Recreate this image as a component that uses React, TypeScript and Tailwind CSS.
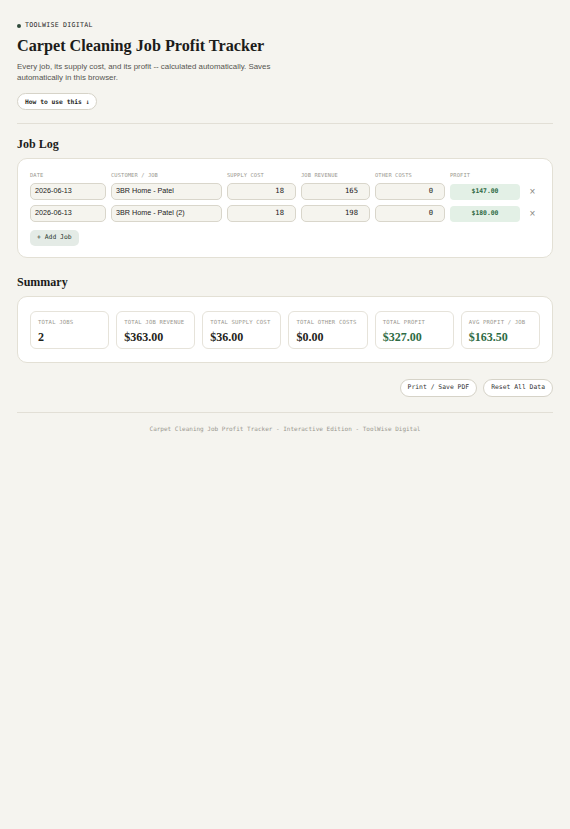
import React from 'react';

type Job = { date: string; customer: string; supply: number; revenue: number; other: number };

const jobs: Job[] = [
  { date: '2026-06-13', customer: '3BR Home - Patel', supply: 18, revenue: 165, other: 0 },
  { date: '2026-06-13', customer: '3BR Home - Patel (2)', supply: 18, revenue: 198, other: 0 },
];

const mono = "font-['DejaVu_Sans_Mono',monospace]";
const serif = "font-['Liberation_Serif',serif]";

const money = (n: number) => '$' + n.toFixed(2);

export default function App() {
  const totalRevenue = jobs.reduce((s, j) => s + j.revenue, 0);
  const totalSupply = jobs.reduce((s, j) => s + j.supply, 0);
  const totalOther = jobs.reduce((s, j) => s + j.other, 0);
  const totalProfit = totalRevenue - totalSupply - totalOther;

  const summary = [
    { label: 'Total Jobs', value: String(jobs.length), green: false },
    { label: 'Total Job Revenue', value: money(totalRevenue), green: false },
    { label: 'Total Supply Cost', value: money(totalSupply), green: false },
    { label: 'Total Other Costs', value: money(totalOther), green: false },
    { label: 'Total Profit', value: money(totalProfit), green: true },
    { label: 'Avg Profit / Job', value: money(totalProfit / jobs.length), green: true },
  ];

  const cols = 'grid grid-cols-[76px_111px_69px_69px_70px_70px_1fr] gap-x-[5px] items-center';

  return (
    <div className="min-h-screen bg-[#f5f4ef] text-[#1c1c1a] font-['Liberation_Sans',Arial,sans-serif]">
      <div className="px-[17px] pt-[21px] pb-[20px]">
        {/* header */}
        <div className={`flex items-center gap-[4px] h-[10px] ${mono} text-[6.6px] tracking-[0.04em] text-[#2a2a28]`}>
          <span className="w-[4px] h-[4px] rounded-full bg-[#2f4a3a]" />
          TOOLWISE DIGITAL
        </div>
        <h1 className={`${serif} font-bold text-[16.2px] leading-[20px] mt-[5px]`}>
          Carpet Cleaning Job Profit Tracker
        </h1>
        <p className="text-[7.9px] leading-[11px] text-[#55544f] mt-[5px] max-w-[275px]">
          Every job, its supply cost, and its profit -- calculated automatically. Saves automatically in this browser.
        </p>
        <div className="flex mt-[10px]">
          <button className={`h-[17px] px-[7px] rounded-full border border-[#d6d3c8] bg-white ${mono} font-bold text-[6.3px] text-[#1f1f1d]`}>
            How to use this ↓
          </button>
        </div>
        <div className="h-px bg-[#e2dfd6] mt-[13px]" />

        {/* job log */}
        <h2 className={`${serif} font-bold text-[12px] leading-[14px] mt-[13px]`}>Job Log</h2>
        <div className="mt-[7px] bg-white border-[1.5px] border-[#e3e0d5] rounded-[10px] px-[12px] pt-[11px] pb-[11px]">
          <div className={`${cols} ${mono} text-[5.4px] text-[#9a988f] tracking-[0.02em] h-[10px]`}>
            <span>DATE</span>
            <span>CUSTOMER / JOB</span>
            <span>SUPPLY COST</span>
            <span>JOB REVENUE</span>
            <span>OTHER COSTS</span>
            <span>PROFIT</span>
            <span />
          </div>
          <div className="flex flex-col gap-[5px] mt-[3px]">
            {jobs.map((j, i) => {
              const profit = j.revenue - j.supply - j.other;
              return (
                <div key={i} className={cols}>
                  <div className="h-[17px] rounded-[5px] border border-[#d9d6cb] bg-[#f5f4ee] px-[4px] flex items-center text-[7.2px] text-[#222]">
                    {j.date}
                  </div>
                  <div className="h-[17px] rounded-[5px] border border-[#d9d6cb] bg-[#f5f4ee] px-[4px] flex items-center text-[7.2px] text-[#222]">
                    {j.customer}
                  </div>
                  {[j.supply, j.revenue, j.other].map((v, k) => (
                    <div
                      key={k}
                      className={`h-[17px] rounded-[5px] border border-[#d9d6cb] bg-[#f5f4ee] px-[11px] flex items-center justify-end ${mono} text-[7.2px] text-[#222]`}
                    >
                      {v}
                    </div>
                  ))}
                  <div className={`h-[16px] rounded-[4px] bg-[#e3f0e6] flex items-center justify-center ${mono} font-bold text-[6.4px] text-[#2f6b45]`}>
                    {money(profit)}
                  </div>
                  <div className="flex justify-center text-[#8a8983] text-[10px] leading-none">×</div>
                </div>
              );
            })}
          </div>
          <button className={`mt-[7px] h-[16px] px-[7px] rounded-[5px] bg-[#e4ebe6] ${mono} text-[6.4px] text-[#2b3a31]`}>
            + Add Job
          </button>
        </div>

        {/* summary */}
        <h2 className={`${serif} font-bold text-[12px] leading-[14px] mt-[17px]`}>Summary</h2>
        <div className="mt-[7px] bg-white border-[1.5px] border-[#e3e0d5] rounded-[10px] px-[12px] py-[13.5px]">
          <div className="grid grid-cols-6 gap-[7px]">
            {summary.map((s) => (
              <div key={s.label} className="h-[38px] rounded-[6px] border border-[#e6e3da] bg-white px-[7px] pt-[7px]">
                <div className={`${mono} text-[5.6px] uppercase tracking-[0.03em] text-[#9a988f] leading-[7px]`}>{s.label}</div>
                <div className={`${serif} font-bold text-[12px] leading-[14px] mt-[4px] ${s.green ? 'text-[#2e6b45]' : 'text-[#1f2420]'}`}>
                  {s.value}
                </div>
              </div>
            ))}
          </div>
        </div>

        {/* actions */}
        <div className="flex justify-end gap-[6px] mt-[16px]">
          <button className={`h-[18px] px-[7px] rounded-full border border-[#d6d3c8] bg-white ${mono} text-[6.4px] text-[#333]`}>
            Print / Save PDF
          </button>
          <button className={`h-[18px] px-[7px] rounded-full border border-[#d6d3c8] bg-white ${mono} text-[6.4px] text-[#333]`}>
            Reset All Data
          </button>
        </div>
        <div className="h-px bg-[#e2dfd6] mt-[15px]" />
        <p className={`text-center ${mono} text-[6px] text-[#9a988f] mt-[11px]`}>
          Carpet Cleaning Job Profit Tracker - Interactive Edition - ToolWise Digital
        </p>
      </div>
    </div>
  );
}
